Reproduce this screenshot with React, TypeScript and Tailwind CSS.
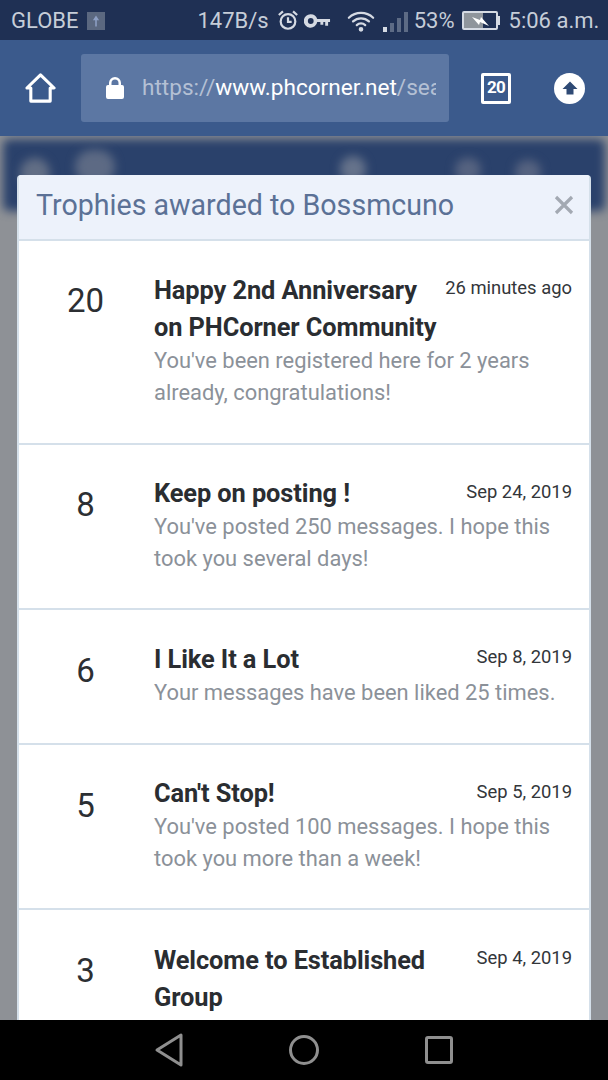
import React from "react";

const trophies = [
  { n: "20", title: ["Happy 2nd Anniversary", "on PHCorner Community"], date: "26 minutes ago", desc: ["You've been registered here for 2 years", "already, congratulations!"], h: "h-[204px]", pt: "pt-[31px]", np: "pt-[4px]", dp: "pt-[1px]" },
  { n: "8", title: ["Keep on posting !"], date: "Sep 24, 2019", desc: ["You've posted 250 messages. I hope this", "took you several days!"], h: "h-[165px]", pt: "pt-[30px]", np: "pt-[5px]", dp: "pt-[2px]" },
  { n: "6", title: ["I Like It a Lot"], date: "Sep 8, 2019", desc: ["Your messages have been liked 25 times."], h: "h-[135px]", pt: "pt-[31px]", np: "pt-[5px]", dp: "pt-[1px]" },
  { n: "5", title: ["Can't Stop!"], date: "Sep 5, 2019", desc: ["You've posted 100 messages. I hope this", "took you more than a week!"], h: "h-[165px]", pt: "pt-[30px]", np: "pt-[6px]", dp: "pt-[2px]" },
  { n: "3", title: ["Welcome to Established", "Group"], date: "Sep 4, 2019", desc: [], h: "h-[160px]", pt: "pt-[32px]", np: "pt-[4px]", dp: "pt-[1px]" },
];

function Row({ t }: { t: (typeof trophies)[number] }) {
  return (
    <div className={`flex ${t.h} ${t.pt} shrink-0 border-b-[2px] border-[#d5e0ea] pr-[17px]`}>
      <div className={`w-[135px] shrink-0 ${t.np} pr-[2px] text-center text-[33px] leading-[50px] text-[#2c2f33]`}>{t.n}</div>
      <div className="min-w-0 flex-1">
        <div className="flex justify-between">
          <div className="text-[25.4px] leading-[37px] font-bold tracking-[-0.1px] text-[#2a2d31]">
            {t.title.map((l) => (
              <div key={l} className="whitespace-nowrap">{l}</div>
            ))}
          </div>
          <div className={`whitespace-nowrap ${t.dp} text-[18.4px] leading-[30px] text-[#33363a]`}>{t.date}</div>
        </div>
        <div className="mt-[-1px] text-[21.9px] leading-[32px] text-[#8b9199]">
          {t.desc.map((l) => (
            <div key={l} className="whitespace-nowrap">{l}</div>
          ))}
        </div>
      </div>
    </div>
  );
}

function StatusBar() {
  return (
    <div className="flex h-[40px] shrink-0 items-center bg-[#1f3054] pl-[11px] pt-[1px] text-[22px] text-[#c6cdd8]">
      <span>GLOBE</span>
      <span className="ml-[9px] flex h-[18px] w-[18px] items-center justify-center bg-[#5b6880]">
        <svg viewBox="0 0 18 18" className="h-[14px] w-[14px]"><path d="M9 2l4 6H10v8H8V8H5z" fill="#8d9fc4" /></svg>
      </span>
      <span className="ml-[92px]">147B/s</span>
      <svg viewBox="0 0 24 24" className="ml-[8px] h-[23px] w-[22px]" fill="none" stroke="#d5dae3" strokeWidth="2.4">
        <circle cx="12" cy="13" r="8" />
        <path d="M12 8.500V13.500H16" />
        <path d="M2 6l4.500-4M22 6l-4.500-4" />
      </svg>
      <svg viewBox="0 0 28 16" className="ml-[5px] h-[16px] w-[27px]" fill="#d5dae3">
        <path fillRule="evenodd" d="M7 1a7 7 0 0 1 6.700 5H27v3h-2v4h-3V9h-2v3h-3V9h-3.300A7 7 0 1 1 7 1zm0 4a3 3 0 1 0 0 6 3 3 0 0 0 0-6z" />
      </svg>
      <svg viewBox="0 0 30 24" className="ml-[16px] h-[23px] w-[28px]" fill="none" stroke="#d5dae3" strokeWidth="2.400" strokeLinecap="round">
        <path d="M2 9a19 19 0 0 1 26 0" />
        <path d="M6.500 13a12.500 12.500 0 0 1 17 0" />
        <path d="M10.500 17a6.500 6.500 0 0 1 9 0" />
        <circle cx="15" cy="21.500" r="1.300" fill="#d5dae3" />
      </svg>
      <span className="ml-[8px] flex h-[22px] items-end gap-[3px]">
        <i className="block h-[5px] w-[4px] bg-[#d5dae3]" />
        <i className="block h-[9px] w-[4px] bg-[#5d6b85]" />
        <i className="block h-[14px] w-[4px] bg-[#5d6b85]" />
        <i className="block h-[20px] w-[4px] bg-[#5d6b85]" />
      </span>
      <span className="ml-[6px] whitespace-nowrap">53%</span>
      <span className="ml-[7px] flex h-[19px] w-[36px] items-center justify-center rounded-[2px] border-[2px] border-[#d5dae3] bg-[linear-gradient(90deg,#8f959c_0,#8f959c_60%,transparent_60%)]">
        <svg viewBox="0 0 20 12" className="h-[12px] w-[20px]"><path d="M2 2l8 3 1-3 8 9-9-4-1 3z" fill="#fff" /></svg>
      </span>
      <span className="h-[9px] w-[2px] bg-[#d5dae3]" />
      <span className="ml-[9px] whitespace-nowrap">5:06 a.m.</span>
    </div>
  );
}

function Header() {
  return (
    <div className="flex h-[96px] shrink-0 items-center bg-[#3b5a8c]">
      <svg viewBox="0 0 32 32" className="ml-[25px] h-[32px] w-[31px]" fill="none" stroke="#fff" strokeWidth="3.200" strokeLinejoin="round">
        <path d="M2 16L16 2.500 30 16H26V29.500H6V16z" />
      </svg>
      <div className="ml-[25px] flex h-[68px] w-[368px] items-center overflow-hidden rounded-[3px] bg-[#5c77a3] pl-[25px] pr-[13px]">
        <svg viewBox="0 0 18 22" className="h-[22px] w-[18px] shrink-0" fill="#fff">
          <path d="M3 8V6a6 6 0 0 1 12 0v2h1a2 2 0 0 1 2 2v10a2 2 0 0 1-2 2H2a2 2 0 0 1-2-2V10a2 2 0 0 1 2-2zm2.500 0h7V6a3.500 3.500 0 0 0-7 0z" />
        </svg>
        <div className="ml-[18px] min-w-0 flex-1 overflow-hidden whitespace-nowrap text-[22.6px] text-[#b4c0d4]">
          https://<span className="text-white">www.phcorner.net</span>/sea
        </div>
      </div>
      <div className="ml-[32px] flex h-[31px] w-[30px] items-center justify-center rounded-[2px] border-[3px] border-white text-[17px] font-bold tracking-[-0.8px] text-white">20</div>
      <div className="ml-[43px] flex h-[31px] w-[31px] items-center justify-center rounded-full bg-white">
        <svg viewBox="0 0 16 16" className="h-[16px] w-[16px]"><path d="M8 1.500l7.500 7.500H11.500v5.500h-7V9H.500z" fill="#2f4a75" /></svg>
      </div>
    </div>
  );
}

export default function App() {
  return (
    <div className="flex h-[1080px] w-[608px] flex-col overflow-hidden bg-black font-['Roboto',sans-serif]">
      <StatusBar />
      <Header />
      <div className="relative min-h-0 flex-1 overflow-hidden bg-[#8e9196] px-[17px] pt-[39px]">
        <div className="absolute inset-x-[3px] top-[3px] h-[72px] rounded-[6px] bg-[#2a416b] blur-[5px]" />
        <div className="absolute left-[20px] top-[22px] h-[30px] w-[30px] rounded-full bg-[#626e85] blur-[5px]" />
        <div className="absolute left-[75px] top-[14px] h-[34px] w-[40px] rounded-full bg-[#5d6a84] blur-[5px]" />
        <div className="absolute left-[340px] top-[20px] h-[26px] w-[26px] rounded-full bg-[#66738b] blur-[5px]" />
        <div className="absolute left-[455px] top-[22px] h-[24px] w-[26px] rounded-full bg-[#566380] blur-[5px]" />
        <div className="absolute left-[515px] top-[24px] h-[24px] w-[26px] rounded-full bg-[#566380] blur-[5px]" />
        <div className="relative overflow-hidden rounded-t-[4px] border-x-[2px] border-[#d5e0ea] bg-white">
          <div className="flex h-[66px] items-center justify-between border-b-[2px] border-[#d5e0ea] bg-[#edf2fb] pb-[4px] pl-[17px] pr-[15px]">
            <span className="whitespace-nowrap text-[28.6px] text-[#5b7196]">Trophies awarded to Bossmcuno</span>
            <svg viewBox="0 0 20 20" className="h-[20px] w-[20px]" stroke="#a3a9b2" strokeWidth="3.200">
              <path d="M2 2L18 18M18 2L2 18" />
            </svg>
          </div>
          {trophies.map((t) => (
            <Row key={t.n} t={t} />
          ))}
        </div>
      </div>
      <div className="flex h-[60px] shrink-0 items-center justify-center bg-black">
        <svg viewBox="0 0 30 36" className="ml-[-2px] h-[36px] w-[30px]" fill="none" stroke="#8f8f8f" strokeWidth="3" strokeLinejoin="round">
          <path d="M27 3V33L3 18z" />
        </svg>
        <svg viewBox="0 0 32 32" className="ml-[104px] h-[32px] w-[32px]" fill="none" stroke="#8f8f8f" strokeWidth="3">
          <circle cx="16" cy="16" r="13.500" />
        </svg>
        <svg viewBox="0 0 28 28" className="ml-[105px] h-[28px] w-[28px]" fill="none" stroke="#8f8f8f" strokeWidth="3">
          <rect x="1.500" y="1.500" width="25" height="25" rx="1.500" />
        </svg>
      </div>
    </div>
  );
}
